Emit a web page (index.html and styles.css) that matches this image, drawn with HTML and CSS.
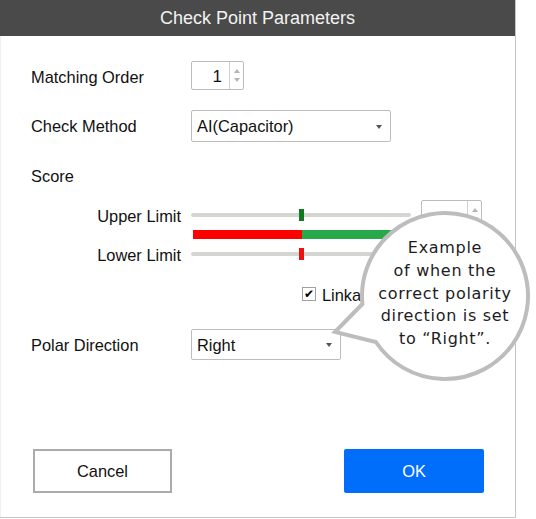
FILE: index.html
```html
<!DOCTYPE html>
<html>
<head>
<meta charset="utf-8">
<link rel="stylesheet" href="styles.css">
</head>
<body>
<div class="dialog">
  <div class="header">Check Point Parameters</div>
  <div class="content">
    <div class="row r1">
      <span class="label">Matching Order</span>
      <div class="spin s-order">
        <span class="val">1</span>
        <span class="arrows"><span class="tri up"></span><span class="tri down"></span></span>
      </div>
    </div>
    <div class="row r2">
      <span class="label">Check Method</span>
      <div class="select w200"><span>AI(Capacitor)</span><span class="caret"></span></div>
    </div>
    <div class="score-label">Score</div>
    <div class="slider-row upper">
      <span class="slabel">Upper Limit</span>
      <div class="track"><div class="thumb t-green"></div></div>
      <div class="spin s-limit">
        <span class="val"></span>
        <span class="arrows"><span class="tri up"></span><span class="tri down"></span></span>
      </div>
    </div>
    <div class="bar"><div class="bar-red"></div><div class="bar-green"></div></div>
    <div class="slider-row lower">
      <span class="slabel">Lower Limit</span>
      <div class="track"><div class="thumb t-red"></div></div>
      <div class="spin s-limit">
        <span class="val"></span>
        <span class="arrows"><span class="tri up"></span><span class="tri down"></span></span>
      </div>
    </div>
    <div class="link-row">
      <span class="checkbox">&#10004;</span>
      <span class="link-text">Linkage</span>
    </div>
    <div class="row r3">
      <span class="label">Polar Direction</span>
      <div class="select w150"><span>Right</span><span class="caret"></span></div>
    </div>
    <div class="buttons">
      <div class="btn cancel">Cancel</div>
      <div class="btn ok">OK</div>
    </div>
  </div>
</div>

<svg class="bubble" width="536" height="519" viewBox="0 0 536 519">
  <path d="M 362.4 304 L 335 332 L 375.9 342 A 83 83 0 1 0 362.4 304 Z" fill="#ffffff" stroke="#bdbdbd" stroke-width="4" stroke-linejoin="miter"/>
</svg>
<div class="bubble-text">Example<br>of when the<br>correct polarity<br>direction is set<br>to “Right”.</div>
</body>
</html>
```

FILE: styles.css
```css
html, body {
  margin: 0;
  padding: 0;
  background: #ffffff;
}

body {
  width: 536px;
  height: 519px;
  position: relative;
  overflow: hidden;
  font-family: "Liberation Sans", Arial, sans-serif;
  color: #111111;
}

.dialog {
  width: 515px;
  height: 517px;
  border-right: 1px solid #c6c6c6;
  border-bottom: 1px solid #c6c6c6;
  display: flex;
  flex-direction: column;
  background: #ffffff;
}

.header {
  height: 36px;
  background: #4a4a4a;
  color: #f2f2f2;
  font-size: 18px;
  line-height: 36px;
  text-align: center;
}

.content {
  display: flex;
  flex-direction: column;
  padding-left: 30px;
  border-left: 1px solid #f0f0f0;
  flex: 1;
}

.row {
  display: flex;
  align-items: center;
}

.label {
  width: 160px;
  font-size: 16.4px;
  line-height: 20px;
  padding-top: 3px;
}

.r2 .label { padding-top: 0; }
.r3 .label { padding-top: 1px; }

.r1 { margin-top: 25px; height: 29px; }
.r2 { margin-top: 20px; height: 32px; }
.r3 { margin-top: 28px; height: 31px; }

.spin {
  box-sizing: border-box;
  height: 29px;
  border: 1px solid #bcbcbc;
  border-radius: 2px;
  display: flex;
  background: #fff;
}

.s-order { width: 53px; }
.s-limit { width: 61px; margin-left: 10px; }

.spin .val {
  flex: 1;
  text-align: right;
  padding-right: 7px;
  font-size: 17px;
  line-height: 29px;
  color: #111;
}

.spin .arrows {
  width: 13px;
  border-left: 1px solid #d0d0d0;
  display: flex;
  flex-direction: column;
  align-items: center;
  justify-content: center;
  gap: 5px;
}

.tri {
  width: 0;
  height: 0;
  border-left: 3px solid transparent;
  border-right: 3px solid transparent;
}

.tri.up { border-bottom: 4px solid #b5b5b5; }
.tri.down { border-top: 4px solid #b5b5b5; }

.select {
  box-sizing: border-box;
  height: 100%;
  border: 1px solid #bdbdbd;
  border-radius: 2px;
  display: flex;
  align-items: center;
  justify-content: space-between;
  padding: 1px 8px 0 5px;
  font-size: 16.4px;
  color: #111;
}

.w200 { width: 200px; }
.w150 { width: 150px; }

.caret {
  width: 0;
  height: 0;
  border-left: 3.5px solid transparent;
  border-right: 3.5px solid transparent;
  border-top: 4px solid #555555;
}

.score-label {
  margin-top: 24px;
  height: 21px;
  line-height: 20px;
  font-size: 16.4px;
}

.slider-row {
  display: flex;
  align-items: center;
}

.slider-row.upper { margin-top: 13px; height: 29px; }
.slider-row.lower { height: 30px; }

.slabel {
  width: 150px;
  padding-right: 10px;
  text-align: right;
  font-size: 16.4px;
  line-height: 20px;
  transform: translateY(1px);
}

.track {
  position: relative;
  width: 220px;
  height: 4px;
  background: #d5d5d1;
  border-radius: 2px;
}

.thumb {
  position: absolute;
  left: 108px;
  top: -4px;
  width: 5px;
  height: 12px;
}

.t-green { background: #0f7a1e; }
.t-red { background: #ec1111; }

.bar {
  margin-top: 1px;
  margin-left: 162px;
  height: 9px;
  display: flex;
}

.bar-red { width: 109px; background: #ff0000; }
.bar-green { width: 108px; background: #27a84a; }

.link-row {
  margin-top: 18px;
  height: 14px;
  display: flex;
  align-items: center;
  margin-left: 271px;
}

.checkbox {
  box-sizing: border-box;
  width: 14px;
  height: 14px;
  border: 1px solid #a0a0a0;
  font-size: 12px;
  line-height: 13px;
  text-align: center;
  color: #000;
}

.link-text {
  margin-left: 6px;
  font-size: 16.4px;
  line-height: 20px;
  padding-top: 2px;
}

.buttons {
  margin-top: 89px;
  display: flex;
  justify-content: space-between;
  padding: 0 31px 0 2px;
}

.btn {
  box-sizing: border-box;
  width: 140px;
  height: 44px;
  display: flex;
  align-items: center;
  justify-content: center;
  font-size: 16.4px;
  border-radius: 2px;
}

.cancel {
  border: 2px solid #ababab;
  border-radius: 0;
  color: #111;
  background: #fff;
  width: 139px;
}

.ok {
  background: #006dfb;
  color: #ffffff;
}

.bubble {
  position: absolute;
  left: 0;
  top: 0;
  pointer-events: none;
}

.bubble-text {
  position: absolute;
  left: 360px;
  top: 237px;
  width: 170px;
  text-align: center;
  font-family: "DejaVu Sans", sans-serif;
  font-size: 16px;
  letter-spacing: 0.7px;
  line-height: 22.8px;
  color: #1c1c24;
}
```
